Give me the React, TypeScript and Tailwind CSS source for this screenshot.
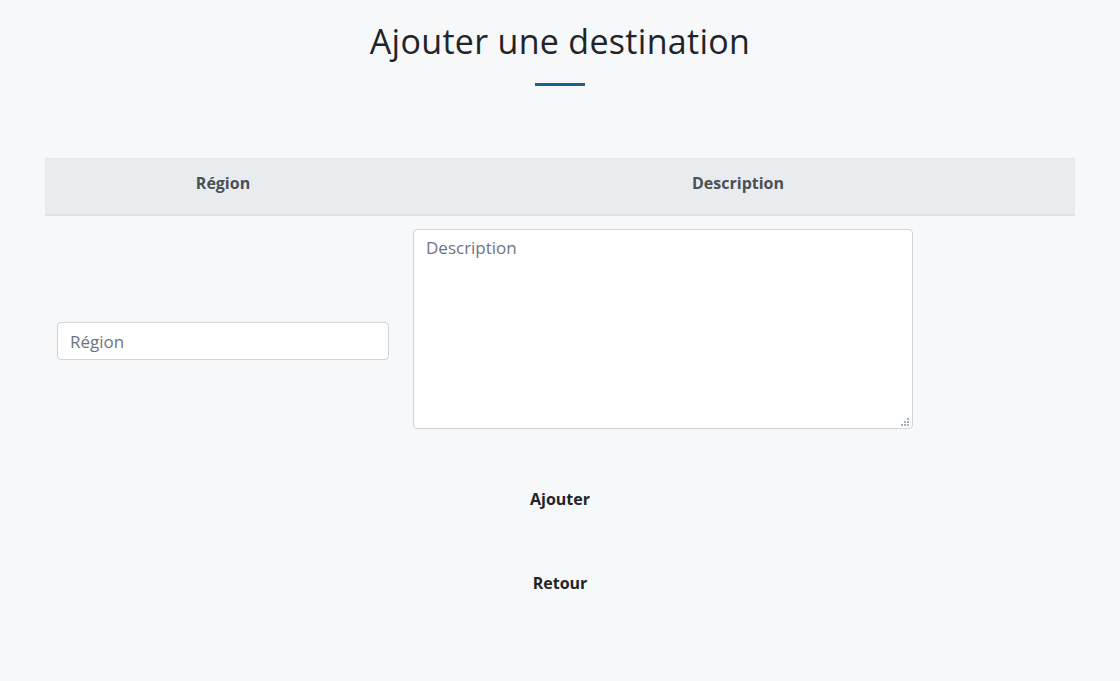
export default function App() {
  return (
    <div
      className="min-h-[681px] bg-[#f7f8fa] text-[#212529]"
      style={{ fontFamily: '"Open Sans", "Noto Sans", sans-serif' }}
    >
      {/* Title */}
      <div className="flex flex-col items-center pt-[20px]">
        <h1 className="text-[34px] font-normal leading-[42px] tracking-[0.3px] text-[#212529]">
          Ajouter une destination
        </h1>
        <div className="mt-[21px] h-[3px] w-[50px] bg-[#1a6391]" />
      </div>

      {/* Form table */}
      <div className="mx-[45px] mt-[72px]">
        <div className="flex h-[58px] items-start border-t border-b-2 border-t-[#e3e6ea] border-b-[#dee2e6] bg-[#e9ecef] pt-[12px] text-[16px] font-bold leading-[24px] text-[#495057]">
          <div className="w-[356px] text-center">Région</div>
          <div className="flex-1 text-center">Description</div>
        </div>
        <div className="flex items-start">
          <div className="w-[356px] px-[12px] pt-[106px]">
            <input
              type="text"
              placeholder="Région"
              className="h-[38px] w-full rounded-[4px] border border-[#ced4da] bg-white px-[12px] text-[17px] text-[#495057] placeholder:text-[#6c757d] focus:outline-none"
            />
          </div>
          <div className="px-[12px] pt-[13px]">
            <div className="relative">
              <textarea
                placeholder="Description"
                className="block h-[200px] w-[500px] resize-none rounded-[4px] border border-[#ced4da] bg-white px-[12px] py-[6px] text-[17px] leading-[24px] text-[#495057] placeholder:text-[#6c757d] focus:outline-none"
              />
              {/* resize grip */}
              <div className="pointer-events-none absolute bottom-[3px] right-[4px] flex flex-col items-end gap-[1px]">
                <div className="flex gap-[1px]">
                  <span className="h-[2px] w-[2px] bg-[#a7adb4]" />
                </div>
                <div className="flex gap-[1px]">
                  <span className="h-[2px] w-[2px] bg-[#a7adb4]" />
                  <span className="h-[2px] w-[2px] bg-[#a7adb4]" />
                </div>
                <div className="flex gap-[1px]">
                  <span className="h-[2px] w-[2px] bg-[#a7adb4]" />
                  <span className="h-[2px] w-[2px] bg-[#a7adb4]" />
                  <span className="h-[2px] w-[2px] bg-[#a7adb4]" />
                </div>
              </div>
            </div>
          </div>
        </div>
      </div>

      {/* Actions */}
      <div className="mt-[58px] flex flex-col items-center gap-[60px] text-[16px] font-bold text-[#212529]">
        <button type="button" className="leading-[24px]">Ajouter</button>
        <button type="button" className="leading-[24px]">Retour</button>
      </div>
    </div>
  );
}
